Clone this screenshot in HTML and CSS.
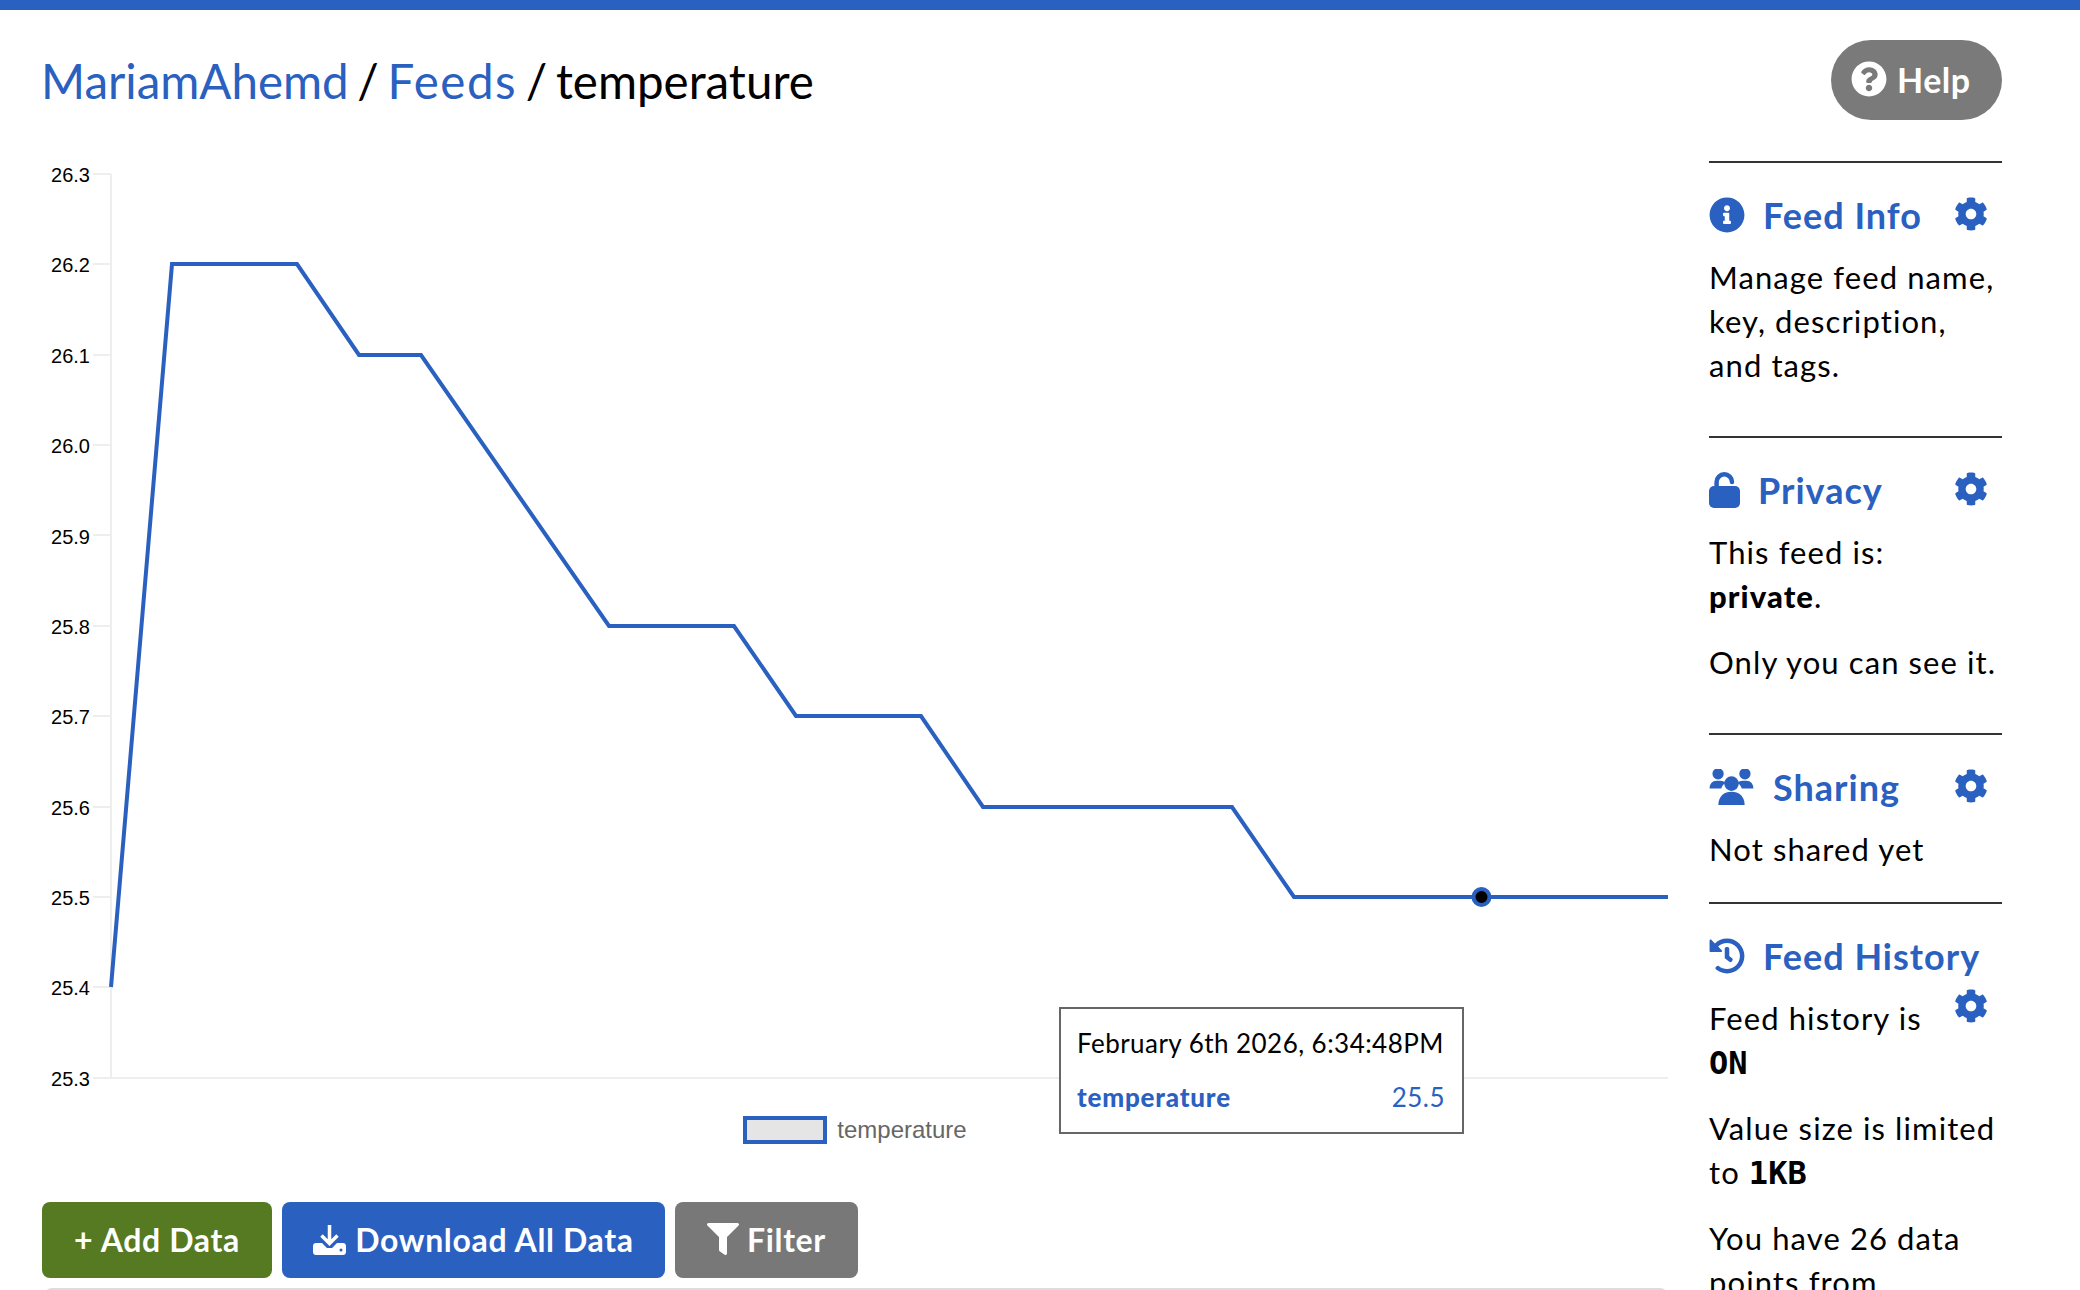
FILE: index.html
```html
<!DOCTYPE html>
<html lang="en">
<head>
    <meta charset="UTF-8">
    <title>temperature</title>
    <link rel="stylesheet" href="styles.css">
</head>
<body>
    <svg class="icon-defs" aria-hidden="true">
        <symbol id="cog" viewBox="0 0 512 512"><path d="M487.4 315.7l-42.6-24.6c4.3-23.2 4.3-47 0-70.2l42.6-24.6c4.9-2.8 7.1-8.6 5.5-14-11.1-35.6-30-67.8-54.7-94.6-3.8-4.1-10-5.1-14.8-2.3L380.8 110c-17.9-15.4-38.5-27.3-60.8-35.1V25.8c0-5.6-3.9-10.5-9.4-11.7-36.7-8.2-74.3-7.8-109.2 0-5.5 1.2-9.4 6.1-9.4 11.7V75c-22.2 7.9-42.8 19.8-60.8 35.1L88.7 85.5c-4.9-2.8-11-1.9-14.8 2.3-24.7 26.7-43.6 58.9-54.7 94.6-1.7 5.4.6 11.2 5.5 14L67.3 221c-4.3 23.2-4.3 47 0 70.2l-42.6 24.6c-4.9 2.8-7.1 8.6-5.5 14 11.1 35.6 30 67.8 54.7 94.6 3.8 4.1 10 5.1 14.8 2.3l42.6-24.6c17.9 15.4 38.5 27.3 60.8 35.1v49.2c0 5.6 3.9 10.5 9.4 11.7 36.7 8.2 74.3 7.8 109.2 0 5.5-1.2 9.4-6.1 9.4-11.7v-49.2c22.2-7.9 42.8-19.8 60.8-35.1l42.6 24.6c4.9 2.8 11 1.9 14.8-2.3 24.7-26.7 43.6-58.9 54.7-94.6 1.5-5.5-.7-11.3-5.6-14.1zM256 336c-44.1 0-80-35.9-80-80s35.9-80 80-80 80 35.9 80 80-35.9 80-80 80z"/></symbol>
    </svg>

    <div class="top-bar"></div>

    <div class="page">
        <div class="main-col">
            <h1 class="crumbs"><a href="#">MariamAhemd</a> / <a href="#" class="crumb-feeds">Feeds</a> / temperature</h1>

            <div class="chart-wrap">
                <svg class="chart" viewBox="42 160 1626 940">
                    <g class="axis">
                        <path d="M111 174V1078H1668"/>
                        <path d="M93 174H111M93 264H111M93 355H111M93 445H111M93 535H111M93 626H111M93 716H111M93 807H111M93 897H111M93 987H111M93 1078H111"/>
                    </g>
                    <g class="tick-labels">
                        <text x="90" y="182">26.3</text>
                        <text x="90" y="272">26.2</text>
                        <text x="90" y="363">26.1</text>
                        <text x="90" y="453">26.0</text>
                        <text x="90" y="544">25.9</text>
                        <text x="90" y="634">25.8</text>
                        <text x="90" y="724">25.7</text>
                        <text x="90" y="815">25.6</text>
                        <text x="90" y="905">25.5</text>
                        <text x="90" y="995">25.4</text>
                        <text x="90" y="1086">25.3</text>
                    </g>
                    <polyline class="line" points="111,987 172,264 297,264 359,355 421,355 609,626 734,626 796,716 921,716 983,807 1232,807 1294,897 1668,897"/>
                    <circle class="marker" cx="1481.500" cy="897" r="8"/>
                </svg>
                <div class="legend">
                    <span class="legend-box"></span>
                    <span class="legend-label">temperature</span>
                </div>
                <div class="tooltip">
                    <div class="tooltip-date">February 6th 2026, 6:34:48PM</div>
                    <div class="tooltip-row">
                        <strong>temperature</strong>
                        <span>25.5</span>
                    </div>
                </div>
            </div>

            <div class="actions">
                <button class="btn btn-green">+ Add Data</button>
                <button class="btn btn-blue">
                    <svg class="btn-icon-dl" viewBox="0 0 33 31">
                        <path class="dl-arrow" d="M16.500 1V19M8.500 11.500L16.500 19.500L24.500 11.500"/>
                        <path d="M3 19H9L14 24H19L24 19H30C31.700 19 33 20.300 33 22V28C33 29.700 31.700 31 30 31H3C1.300 31 0 29.700 0 28V22C0 20.300 1.300 19 3 19Z"/>
                        <circle class="dl-dot" cx="28" cy="26" r="1.500"/>
                    </svg>
                    Download All Data
                </button>
                <button class="btn btn-gray">
                    <svg class="btn-icon-filter" viewBox="0 0 512 512"><path d="M487.976 0H24.028C2.71 0-8.047 25.866 7.058 40.971L192 225.941V432c0 7.831 3.821 15.17 10.237 19.662l80 55.98C298.02 518.69 320 507.493 320 487.98V225.941l184.947-184.97C520.021 25.896 509.338 0 487.976 0z"/></svg>
                    Filter
                </button>
            </div>
            <div class="table-top"></div>
        </div>

        <aside class="side-col">
            <button class="help-btn">
                <svg class="help-icon" viewBox="0 0 512 512"><path d="M504 256c0 136.997-111.043 248-248 248S8 392.997 8 256C8 119.083 119.043 8 256 8s248 111.083 248 248zM262.655 90c-54.497 0-89.255 22.957-116.549 63.758-3.536 5.286-2.353 12.415 2.715 16.258l34.699 26.31c5.205 3.947 12.621 3.008 16.665-2.122 17.864-22.658 30.113-35.797 57.303-35.797 20.429 0 45.698 13.148 45.698 32.958 0 14.976-12.363 22.667-32.534 33.976C247.128 238.528 216 254.941 216 296v4c0 6.627 5.373 12 12 12h56c6.627 0 12-5.373 12-12v-1.333c0-28.462 83.186-29.647 83.186-106.667 0-58.002-60.165-102-116.531-102zM256 338c-25.365 0-46 20.635-46 46 0 25.364 20.635 46 46 46s46-20.636 46-46c0-25.365-20.635-46-46-46z"/></svg>
                Help
            </button>

            <section class="side-section section-tall">
                <div class="side-head">
                    <h3>
                        <svg class="head-icon info-icon" viewBox="0 0 512 512"><path d="M256 8C119.043 8 8 119.083 8 256c0 136.997 111.043 248 248 248s248-111.003 248-248C504 119.083 392.957 8 256 8zm0 110c23.196 0 42 18.804 42 42s-18.804 42-42 42-42-18.804-42-42 18.804-42 42-42zm56 254c0 6.627-5.373 12-12 12h-88c-6.627 0-12-5.373-12-12v-24c0-6.627 5.373-12 12-12h12v-64h-12c-6.627 0-12-5.373-12-12v-24c0-6.627 5.373-12 12-12h64c6.627 0 12 5.373 12 12v100h12c6.627 0 12 5.373 12 12v24z"/></svg>
                        Feed Info
                    </h3>
                    <svg class="gear"><use href="#cog"/></svg>
                </div>
                <p>Manage feed name, key, description, and tags.</p>
            </section>

            <section class="side-section section-tall">
                <div class="side-head">
                    <h3>
                        <svg class="head-icon lock-icon" viewBox="0 0 31 36">
                            <path class="lock-shackle" d="M7.600 15V10A7.700 7.700 0 0 1 23 10"/>
                            <rect y="14" width="31" height="22" rx="5"/>
                        </svg>
                        Privacy
                    </h3>
                    <svg class="gear"><use href="#cog"/></svg>
                </div>
                <p>This feed is:<br><strong>private</strong>.</p>
                <p>Only you can see it.</p>
            </section>

            <section class="side-section section-sharing">
                <div class="side-head">
                    <h3>
                        <svg class="head-icon users-icon" viewBox="8 11 45 37">
                            <circle cx="16.700" cy="16" r="5.800"/>
                            <circle cx="44.300" cy="16" r="5.800"/>
                            <circle cx="30.500" cy="26" r="7.500"/>
                            <path d="M8 31C8 26 11 23 15 23H19C21 23 23 24 24.500 25C22 27 20.500 29 20 31Z"/>
                            <path d="M53 31C53 26 50 23 46 23H42C40 23 38 24 36.500 25C39 27 40.500 29 41 31Z"/>
                            <path d="M17 48C17 39 23 34.500 30.500 34.500C38 34.500 44 39 44 48Z"/>
                        </svg>
                        Sharing
                    </h3>
                    <svg class="gear"><use href="#cog"/></svg>
                </div>
                <p>Not shared yet</p>
            </section>

            <section class="side-section">
                <h3>
                    <svg class="head-icon info-icon" viewBox="0 0 512 512"><path d="M504 255.531c.253 136.640-111.180 248.372-247.820 248.468-59.015.042-113.223-20.530-155.822-54.911-11.077-8.940-11.905-25.541-1.839-35.607l11.267-11.267c8.609-8.609 22.353-9.551 31.891-1.984C173.062 425.135 212.781 440 256 440c101.705 0 184-82.311 184-184 0-101.705-82.311-184-184-184-48.814 0-93.149 18.969-126.068 49.932l50.754 50.754c10.080 10.080 2.941 27.314-11.313 27.314H24c-8.837 0-16-7.163-16-16V38.627c0-14.254 17.234-21.393 27.314-11.314l49.372 49.372C129.209 34.136 189.552 8 256 8c136.810 0 247.747 110.780 248 247.531zm-180.912 78.784l9.823-12.630c8.138-10.463 6.253-25.542-4.210-33.679L288 256.349V152c0-13.255-10.745-24-24-24h-16c-13.255 0-24 10.745-24 24v135.651l65.409 50.874c10.463 8.137 25.541 6.253 33.679-4.210z"/></svg>
                    Feed History
                </h3>
                <svg class="gear gear-float"><use href="#cog"/></svg>
                <p>Feed history is<br><code>ON</code></p>
                <p>Value size is limited to <code>1KB</code></p>
                <p>You have 26 data points from</p>
            </section>
        </aside>
    </div>
</body>
</html>
```

FILE: styles.css
```css
html, body {
    margin: 0;
    padding: 0;
    height: 100%;
    overflow: hidden;
    background-color: #fff;
}
body {
    font-family: "Lato", "Noto Sans", sans-serif;
    font-size: 30px;
    color: #000;
}
.icon-defs {
    display: none;
}
.top-bar {
    height: 10px;
    background-color: #2a60bf;
}
.page {
    display: grid;
    grid-template-columns: 1626px 293px;
    column-gap: 41px;
    padding-left: 42px;
}

/* left column */
.crumbs {
    margin: 0 0 0 -1px;
    padding-top: 43px;
    height: 150px;
    box-sizing: border-box;
    font-size: 47.500px;
    font-weight: 400;
    line-height: 56px;
    word-spacing: -3.500px;
}
.crumbs a {
    color: #2a60bf;
    text-decoration: none;
}
.crumb-feeds {
    letter-spacing: 1.500px;
}
.chart-wrap {
    position: relative;
}
.chart {
    display: block;
    width: 1626px;
    height: 940px;
}
.axis path {
    fill: none;
    stroke: #eee;
    stroke-width: 2;
}
.tick-labels text {
    font-family: "Liberation Sans", sans-serif;
    font-size: 20px;
    text-anchor: end;
    fill: #000;
}
.line {
    fill: none;
    stroke: #2a60bf;
    stroke-width: 4;
    stroke-linejoin: miter;
}
.marker {
    fill: #000;
    stroke: #2a60bf;
    stroke-width: 4;
}
.legend {
    display: flex;
    justify-content: center;
    align-items: center;
    gap: 10px;
    margin-top: 16px;
    height: 28px;
}
.legend-box {
    width: 84px;
    height: 28px;
    box-sizing: border-box;
    border: 4px solid #2a60bf;
    background-color: #e5e5e5;
}
.legend-label {
    font-family: "Liberation Sans", sans-serif;
    font-size: 24px;
    color: #666;
}
.tooltip {
    position: absolute;
    left: 1017px;
    top: 847px;
    width: 405px;
    height: 127px;
    box-sizing: border-box;
    border: 2px solid #666;
    background-color: #fff;
    padding: 17px 17px 18px 16px;
    font-size: 26px;
    letter-spacing: 0.450px;
}
.tooltip-date {
    line-height: 34px;
    white-space: nowrap;
}
.tooltip-row {
    display: flex;
    justify-content: space-between;
    margin-top: 20px;
    line-height: 34px;
    color: #2a60bf;
}
.tooltip-row strong {
    font-weight: 900;
    letter-spacing: 0.800px;
}
.actions {
    display: flex;
    gap: 10px;
    margin-top: 58px;
}
.btn {
    display: flex;
    align-items: center;
    justify-content: center;
    height: 76px;
    padding: 0 0 2px;
    border: none;
    border-radius: 8px;
    color: #fff;
    font-family: inherit;
    font-size: 32px;
    font-weight: 700;
    letter-spacing: 0.650px;
}
.btn-green {
    width: 230px;
    background-color: #557a22;
}
.btn-blue {
    width: 383px;
    background-color: #2a60bf;
    gap: 9px;
}
.btn-gray {
    width: 183px;
    background-color: #787878;
    gap: 8px;
}
.btn-icon-dl {
    width: 33px;
    height: 31px;
    fill: #fff;
}
.dl-arrow {
    fill: none;
    stroke: #fff;
    stroke-width: 3.500;
}
.dl-dot {
    fill: #2a60bf;
}
.btn-icon-filter {
    width: 32px;
    height: 32px;
    fill: #fff;
}
.table-top {
    height: 10px;
    margin-top: 10px;
    margin-left: 2px;
    border-radius: 8px 8px 0 0;
    background-color: #ddd;
}

/* right column */
.side-col {
    font-size: 31px;
    line-height: 44px;
    letter-spacing: 1.100px;
}
.help-btn {
    display: flex;
    align-items: center;
    gap: 10px;
    margin: 30px 0 41px auto;
    width: 171px;
    height: 80px;
    padding: 0 0 2px 20px;
    box-sizing: border-box;
    border: none;
    border-radius: 40px;
    background-color: #7a7a7a;
    color: #fff;
    font-family: inherit;
    font-size: 34px;
    font-weight: 700;
    letter-spacing: 0.500px;
}
.help-icon {
    width: 36px;
    height: 36px;
    fill: #fff;
}
.side-section {
    border-top: 2px solid #333;
    padding-top: 33px;
    padding-bottom: 7px;
}
.section-tall {
    padding-bottom: 27px;
}
.section-sharing {
    padding-bottom: 9px;
}
.side-section p {
    margin: 0 0 22px;
}
.side-head {
    display: flex;
    justify-content: space-between;
    padding-right: 14px;
}
.side-section h3 {
    display: flex;
    align-items: center;
    margin: 0 0 21px;
    font-size: 36px;
    font-weight: 700;
    line-height: 38px;
    color: #2a60bf;
    letter-spacing: 1px;
}
.head-icon {
    fill: #2a60bf;
    height: 36px;
}
.info-icon {
    width: 36px;
    margin-right: 18px;
}
.lock-icon {
    width: 31px;
    margin-right: 18px;
}
.lock-shackle {
    fill: none;
    stroke: #2a60bf;
    stroke-width: 4.500;
    stroke-linecap: round;
}
.users-icon {
    width: 45px;
    margin-right: 19px;
}
.gear {
    width: 34px;
    height: 36px;
    fill: #2a60bf;
}
.gear-float {
    float: right;
    margin: -8px 14px 0 10px;
}
.side-section strong {
    font-weight: 900;
}
code {
    font-family: "DejaVu Sans Mono", monospace;
    font-weight: 700;
    font-size: 32px;
    line-height: 0;
    letter-spacing: 0;
}
```
